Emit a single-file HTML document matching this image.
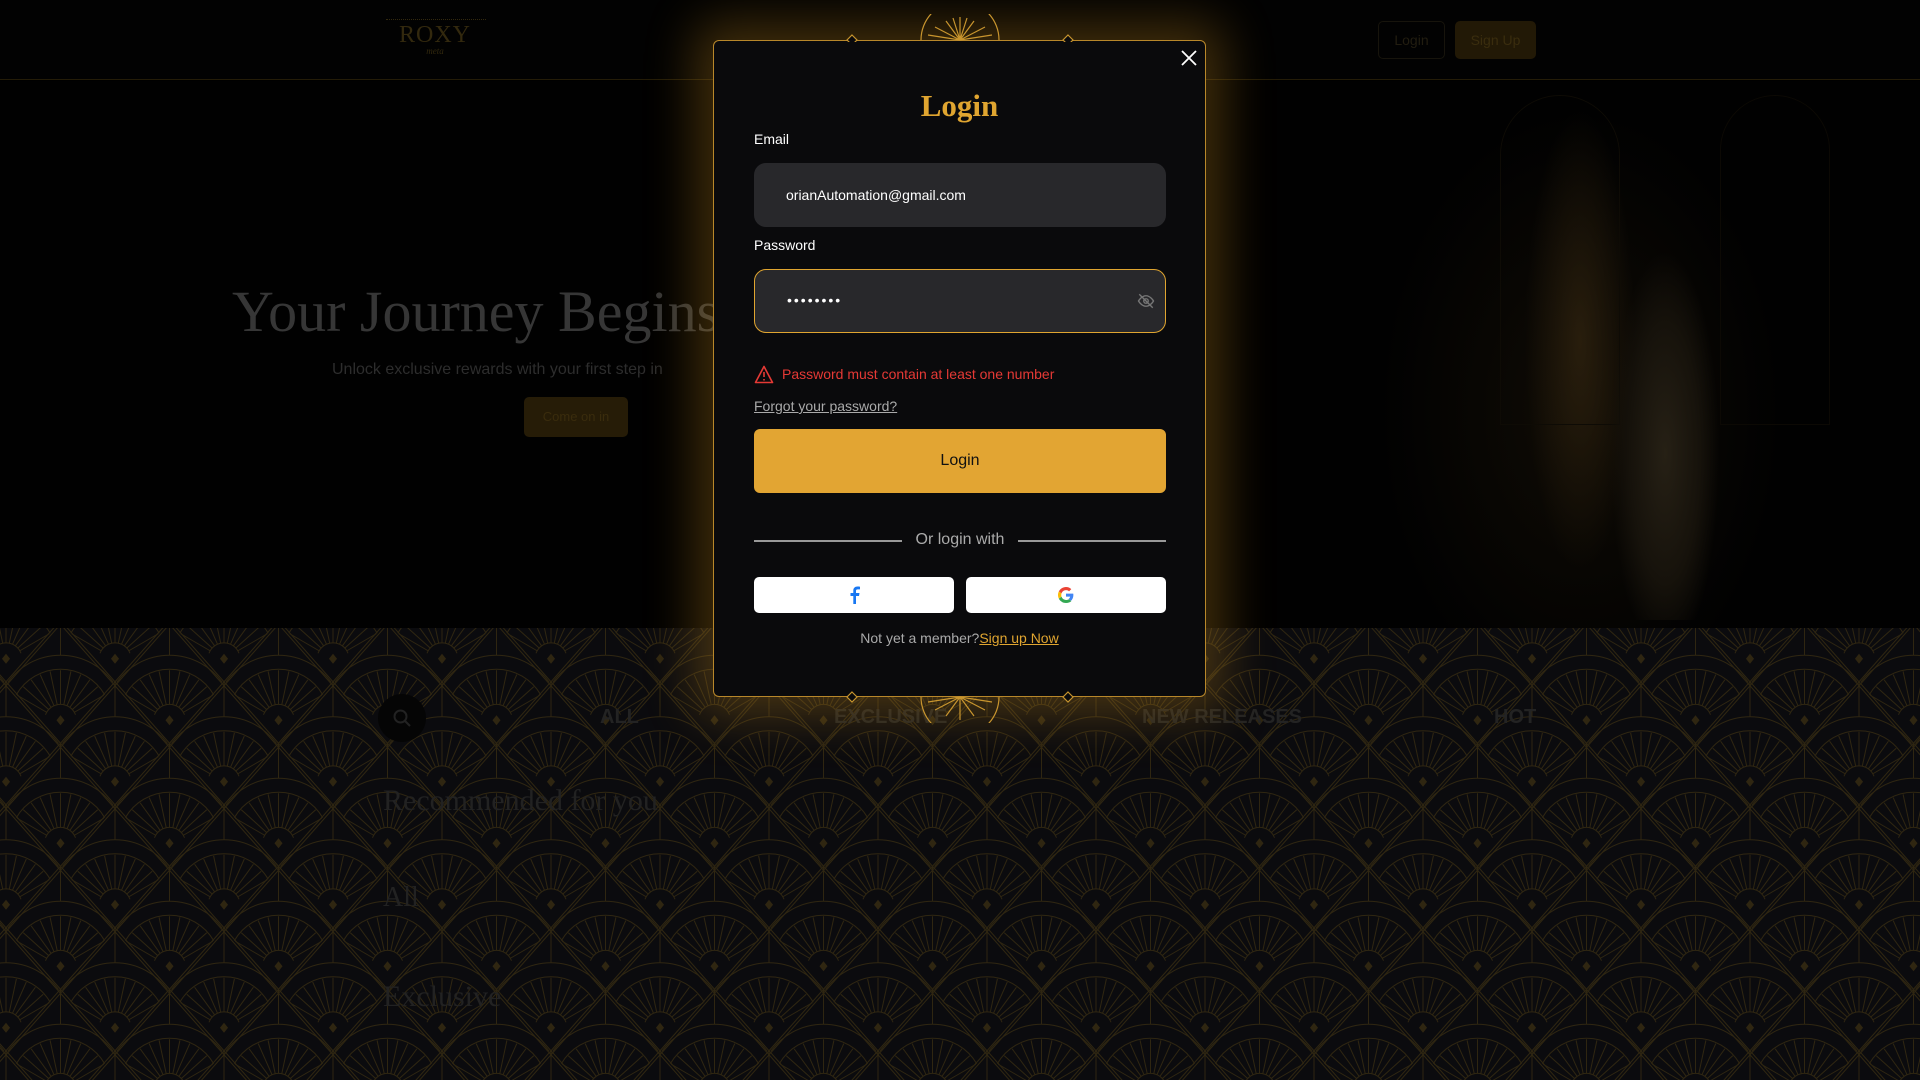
<!DOCTYPE html>
<html><head><meta charset="utf-8"><style>
*{margin:0;padding:0;box-sizing:border-box}
body{width:1920px;height:1080px;overflow:hidden;background:#000;font-family:"Liberation Sans",sans-serif;position:relative}
.abs{position:absolute}
.serif{font-family:"Liberation Serif",serif}
</style></head><body>
<!-- header -->
<div class="abs" style="left:0;top:0;width:1920px;height:80px;background:#020202;border-bottom:1px solid #241c07"></div>
<div class="abs serif" style="left:395px;top:22px;width:80px;text-align:center;color:#33290e;font-size:24px;letter-spacing:1px">ROXY</div>
<div class="abs serif" style="left:415px;top:46px;width:40px;text-align:center;color:#33290e;font-size:9px;font-style:italic">meta</div>
<div class="abs" style="left:386px;top:19px;width:100px;height:2px;border-top:1px dotted #33290e"></div>
<div class="abs" style="left:1378px;top:21px;width:67px;height:38px;border:1px solid #17140c;border-radius:5px;color:#221d10;font-size:14px;text-align:center;line-height:36px">Login</div>
<div class="abs" style="left:1455px;top:21px;width:81px;height:38px;background:#221906;border-radius:5px;color:#3a2d0e;font-size:14px;text-align:center;line-height:38px">Sign Up</div>
<!-- hero -->
<div class="abs" style="left:0;top:81px;width:1920px;height:547px;background:#010101"></div>
<div class="abs" style="left:1240px;top:81px;width:680px;height:547px;background:radial-gradient(ellipse 55px 230px at 340px 260px,rgba(52,38,16,0.7),transparent),radial-gradient(ellipse 200px 300px at 340px 330px,rgba(30,22,9,0.5),transparent)"></div>
<div class="abs" style="left:1500px;top:95px;width:120px;height:330px;border:1px solid #0e0b05;border-radius:60px 60px 0 0"></div>
<div class="abs" style="left:1720px;top:95px;width:110px;height:330px;border:1px solid #0c0904;border-radius:55px 55px 0 0"></div>
<div class="abs" style="left:1610px;top:250px;width:110px;height:370px;background:radial-gradient(ellipse at 50% 55%,#262015 0%,#16120b 45%,transparent 70%)"></div>
<div class="abs serif" style="left:232px;top:278px;font-size:58px;color:#363636;white-space:nowrap">Your Journey Begins</div>
<div class="abs" style="left:332px;top:361px;font-size:16px;color:#2d2d2d;white-space:nowrap">Unlock exclusive rewards with your first step in</div>
<div class="abs" style="left:524px;top:397px;width:104px;height:40px;background:#261c07;border-radius:5px;color:#3a2c0d;font-size:13px;text-align:center;line-height:40px">Come on in</div>
<!-- pattern -->
<svg class="abs" style="left:0;top:628px" width="1920" height="452">
<defs>
<g id="u" fill="none" stroke="#2f2611" stroke-width="1">
<path d="M-15 -5.5A16 16 0 0 1 15 -5.5M-44.2 -25.5A51 51 0 0 1 44.2 -25.5M-52.6 -38.2A65 65 0 0 1 52.6 -38.2"/>
<path d="M0 -16L0 -50M3.3 -15.6L10.4 -48.9M6.5 -14.6L20.3 -45.7M9.4 -12.9L29.4 -40.5M11.9 -10.7L37.2 -33.5M13.9 -8L43.3 -25M-3.3 -15.6L-10.4 -48.9M-6.5 -14.6L-20.3 -45.7M-9.4 -12.9L-29.4 -40.5M-11.9 -10.7L-37.2 -33.5M-13.9 -8L-43.3 -25"/>
<path d="M0 -65L0 -100M0 23L54.5 -38.5M0 23L-54.5 -38.5M0 27L54.5 -34.5M0 27L-54.5 -34.5"/>
<path d="M0 -5L4 0L0 5L-4 0z" fill="#2f2611" stroke="none"/>
</g>
<pattern id="p" width="109" height="123" patternUnits="userSpaceOnUse" x="6" y="0">
<rect width="109" height="123" fill="#0b0b0e"/>
<use href="#u" x="0" y="30.75"/><use href="#u" x="109" y="30.75"/>
<use href="#u" x="54.5" y="92.25"/><use href="#u" x="54.5" y="-30.75"/>
<use href="#u" x="0" y="153.75"/><use href="#u" x="109" y="153.75"/>
<use href="#u" x="54.5" y="215.25"/>
</pattern></defs>
<rect width="1920" height="452" fill="url(#p)"/>
</svg>
<div class="abs" style="left:378px;top:694px;width:48px;height:48px;border-radius:50%;background:#050505"></div>
<svg class="abs" style="left:392px;top:708px" width="20" height="20" viewBox="0 0 20 20" fill="none" stroke="#222" stroke-width="2"><circle cx="8.5" cy="8.5" r="6"/><path d="M13 13l5 5"/></svg>
<div class="abs" style="left:600px;top:706px;font-size:20px;font-weight:bold;color:#232323">ALL</div>
<div class="abs" style="left:834px;top:706px;font-size:20px;font-weight:bold;color:#232323">EXCLUSIVE</div>
<div class="abs" style="left:1142px;top:706px;font-size:20px;font-weight:bold;color:#232323">NEW RELEASES</div>
<div class="abs" style="left:1494px;top:706px;font-size:20px;font-weight:bold;color:#232323">HOT</div>
<div class="abs serif" style="left:383px;top:784px;font-size:30px;color:#222">Recommended for you</div>
<div class="abs serif" style="left:383px;top:882px;font-size:28px;color:#222">All</div>
<div class="abs serif" style="left:383px;top:980px;font-size:30px;color:#222">Exclusive</div>
<!-- modal -->
<div class="abs" style="left:713px;top:40px;width:493px;height:657px;background:#0a0a0c;border:1.5px solid #b8872a;border-radius:6px;box-shadow:0 0 50px 18px rgba(200,140,30,0.32)"></div>
<svg class="abs" style="left:840px;top:14px" width="240" height="28" viewBox="0 0 240 28">
<g fill="none" stroke="#c8952e" stroke-width="1.2">
<path d="M81 26 A39 39 0 0 1 159 26"/><path d="M120 26 L120 3 M120 26 L106 7 M120 26 L134 7 M120 26 L95 13 M120 26 L145 13 M120 26 L88 21 M120 26 L152 21 M120 26 L113 4 M120 26 L127 4"/>
<path d="M12 21 l5 5 l-5 5 l-5 -5z M228 21 l5 5 l-5 5 l-5 -5z" fill="#0a0a0c"/></g></svg>
<svg class="abs" style="left:840px;top:683px" width="240" height="40" viewBox="0 0 240 40">
<g fill="none" stroke="#c8952e" stroke-width="1.2">
<path d="M81 14 A39 39 0 0 0 159 14"/><path d="M120 14 L120 37 M120 14 L106 33 M120 14 L134 33 M120 14 L95 27 M120 14 L145 27 M120 14 L88 19 M120 14 L152 19"/>
<path d="M12 9 l5 5 l-5 5 l-5 -5z M228 9 l5 5 l-5 5 l-5 -5z" fill="#0a0a0c"/></g></svg>
<svg class="abs" style="left:1181px;top:50px" width="16" height="16"><path d="M1 1L15 15M15 1L1 15" stroke="#fff" stroke-width="1.8"/></svg>
<div class="abs serif" style="left:713px;top:88px;width:493px;text-align:center;font-size:31px;font-weight:bold;color:#e0a530">Login</div>
<div class="abs" style="left:754px;top:131px;font-size:14px;color:#fff">Email</div>
<div class="abs" style="left:754px;top:163px;width:412px;height:64px;background:#28282b;border-radius:12px;color:#fff;font-size:14px;line-height:64px;padding-left:32px">orianAutomation@gmail.com</div>
<div class="abs" style="left:754px;top:237px;font-size:14px;color:#fff">Password</div>
<div class="abs" style="left:754px;top:269px;width:412px;height:64px;background:#28282b;border:1.5px solid #e0a530;border-radius:12px;color:#fff;font-size:14px;line-height:60px;padding-left:32px;letter-spacing:2px">••••••••</div>
<svg class="abs" style="left:1137px;top:292px" width="18" height="18" viewBox="0 0 24 24" fill="none" stroke="#777" stroke-width="1.8"><path d="M2 12s4-7 10-7 10 7 10 7-4 7-10 7S2 12 2 12z"/><circle cx="12" cy="12" r="3"/><path d="M3 3l18 18"/></svg>
<svg class="abs" style="left:754px;top:365px" width="20" height="19" viewBox="0 0 20 19" fill="none" stroke="#e53935" stroke-width="1.6"><path d="M10 1.5L18.5 17.5H1.5z" stroke-linejoin="round"/><path d="M10 7v5M10 14v1.5"/></svg>
<div class="abs" style="left:782px;top:366px;font-size:14px;color:#e53935">Password must contain at least one number</div>
<div class="abs" style="left:754px;top:398px;font-size:14px;color:#aaa;text-decoration:underline">Forgot your password?</div>
<div class="abs" style="left:754px;top:429px;width:412px;height:64px;background:#e2a533;border-radius:6px;color:#111;font-size:16px;text-align:center;line-height:64px">Login</div>
<div class="abs" style="left:754px;top:540px;width:148px;height:2px;background:#999"></div>
<div class="abs" style="left:1018px;top:540px;width:148px;height:2px;background:#999"></div>
<div class="abs" style="left:902px;top:531px;width:116px;text-align:center;font-size:16px;color:#aaa">Or login with</div>
<div class="abs" style="left:754px;top:577px;width:200px;height:36px;background:#fff;border-radius:5px"></div>
<svg class="abs" style="left:847px;top:586px" width="14" height="18" viewBox="0 0 14 18"><path d="M9 18V10h3l.5-3H9V5c0-1 .4-1.6 1.7-1.6H13V.7C12.5.6 11.5.5 10.4.5 8 .5 6.3 2 6.3 4.6V7H3.5v3h2.8v8z" fill="#1877f2"/></svg>
<div class="abs" style="left:966px;top:577px;width:200px;height:36px;background:#fff;border-radius:5px"></div>
<svg class="abs" style="left:1058px;top:587px" width="16" height="16" viewBox="0 0 48 48"><path fill="#EA4335" d="M24 9.5c3.5 0 6.6 1.2 9.1 3.6l6.8-6.8C35.8 2.4 30.3 0 24 0 14.6 0 6.6 5.4 2.6 13.2l7.9 6.2C12.4 13.7 17.7 9.5 24 9.5z"/><path fill="#4285F4" d="M46.1 24.5c0-1.6-.1-3.1-.4-4.5H24v9h12.4c-.5 2.9-2.2 5.3-4.6 6.900l7.2 5.6c4.2-3.9 7.1-9.7 7.1-17z"/><path fill="#FBBC05" d="M10.5 28.6c-.5-1.4-.8-3-.8-4.6s.3-3.2.8-4.6l-7.9-6.2C.9 16.6 0 20.2 0 24s.9 7.4 2.6 10.8z"/><path fill="#34A853" d="M24 48c6.5 0 11.9-2.1 15.9-5.8l-7.2-5.6c-2.1 1.4-4.9 2.3-8.7 2.3-6.3 0-11.6-4.2-13.5-9.9l-7.9 6.2C6.6 42.6 14.6 48 24 48z"/></svg>
<div class="abs" style="left:713px;top:630px;width:493px;text-align:center;font-size:14px;color:#aaa">Not yet a member?<span style="color:#e0a530;text-decoration:underline">Sign up Now</span></div>
</body></html>
